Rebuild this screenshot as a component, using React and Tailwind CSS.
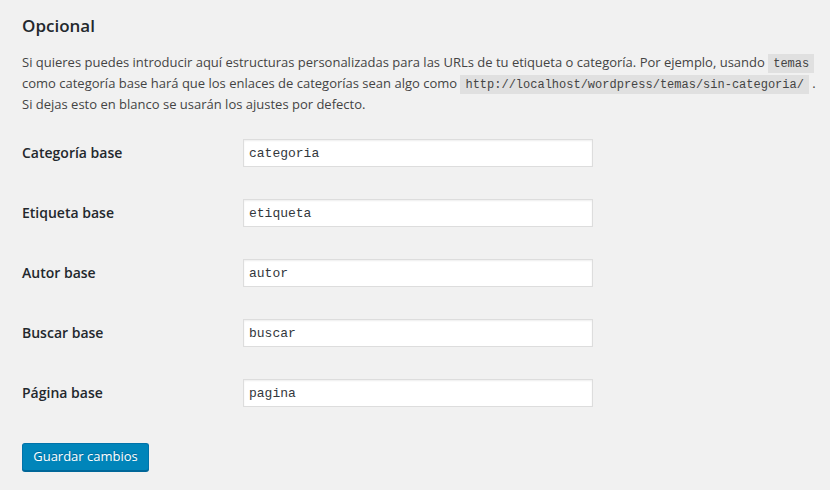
const fields = [
  { label: 'Categoría base', value: 'categoria' },
  { label: 'Etiqueta base', value: 'etiqueta' },
  { label: 'Autor base', value: 'autor' },
  { label: 'Buscar base', value: 'buscar' },
  { label: 'Página base', value: 'pagina' },
];

const Code = ({ children }) => (
  <code className="bg-[#e0e0e0] px-[5px] pt-[3px] pb-[2px] text-[12px] text-[#444] font-['Liberation_Mono',monospace]">
    {children}
  </code>
);

export default function App() {
  return (
    <div className="min-h-[490px] w-[830px] bg-[#f1f1f1] pl-[22px] pr-[10px] pt-[14px] font-['Open_Sans',sans-serif] text-[13px] text-[#444]">
      <h2 className="text-[17px] leading-[24px] font-semibold text-[#23282d]">Opcional</h2>

      <p className="mt-[15px] whitespace-nowrap leading-[19px]">
        Si quieres puedes introducir aquí estructuras personalizadas para las URLs de tu etiqueta o categoría. Por ejemplo, usando <Code>temas</Code>
        <br />
        como categoría base hará que los enlaces de categorías sean algo como <Code>http://localhost/wordpress/temas/sin-categoria/</Code> .
        <br />
        Si dejas esto en blanco se usarán los ajustes por defecto.
      </p>

      {/* Fields */}
      <div className="mt-[25px] flex flex-col">
        {fields.map((f) => (
          <div key={f.value} className="flex h-[60px] items-start">
            <label className="w-[221px] pt-[5px] text-[14px] leading-[18px] font-semibold text-[#23282d]">
              {f.label}
            </label>
            <input
              type="text"
              defaultValue={f.value}
              className="h-[28px] w-[350px] border border-[#ddd] bg-white px-[5px] text-[13px] text-[#32373c] shadow-[inset_0_1px_2px_rgba(0,0,0,0.07)] outline-none font-['Liberation_Mono',monospace]"
            />
          </div>
        ))}
      </div>

      <button className="mt-[4px] h-[28px] w-[127px] rounded-[3px] border border-[#0073aa] border-b-[#006799] bg-[#0085ba] px-[10px] text-[13px] text-white shadow-[0_1px_0_#006799] [text-shadow:0_-1px_1px_#006799]">
        Guardar cambios
      </button>
    </div>
  );
}
